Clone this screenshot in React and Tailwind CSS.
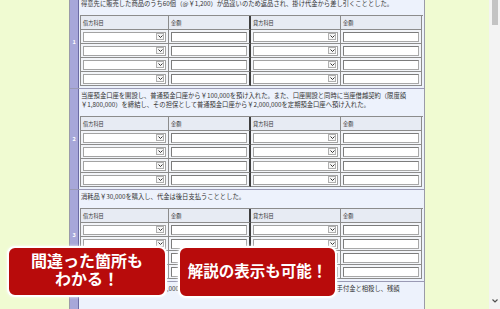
const questions = [
  {
    no: 1,
    lines: ['得意先に販売した商品のうち60個（@￥1,200）が品違いのため返品され、掛け代金から差し引くこととした。'],
  },
  {
    no: 2,
    lines: [
      '当座預金口座を開設し、普通預金口座から￥100,000を預け入れた。また、口座開設と同時に当座借越契約（限度額',
      '￥1,800,000）を締結し、その担保として普通預金口座から￥2,000,000を定期預金口座へ預け入れた。',
    ],
  },
  {
    no: 3,
    lines: ['消耗品￥30,000を購入し、代金は後日支払うこととした。'],
  },
  {
    no: 4,
    lines: ['かねて注文していた商品￥300,000を仕入れ、代金のうち￥60,000は注文時に支払っていた手付金と相殺し、残額'],
    cut: true,
  },
]

function SelectBox() {
  return (
    <div className="flex h-[10px] w-full items-center justify-end border border-[#a3a3a3] bg-white pr-[1px]">
      <div className="flex h-[7px] w-[8px] items-center justify-center border border-[#b0b0b0] bg-[#f6f6f6]">
        <svg width="5" height="3" viewBox="0 0 5 3">
          <path d="M0.5 0.5 L2.5 2.5 L4.5 0.5" stroke="#333" strokeWidth="1" fill="none" />
        </svg>
      </div>
    </div>
  )
}

function InputBox() {
  return <div className="h-[10px] w-full border border-[#a8a8a8] border-l-[#7c7c7c] border-t-[#7c7c7c] bg-white" />
}

function EntryTable() {
  const cell = 'flex h-[14px] items-center border-b border-r border-[#8c8c8c] px-[2px]'
  return (
    <div className="grid w-[343px] grid-cols-[88px_82px_90px_81px] border-l border-t border-[#8c8c8c] text-[5.2px] text-[#333]">
      <div className={`${cell} bg-[#e7ebf3]`}>借方科目</div>
      <div className={`${cell} border-r-2 border-r-[#3e3e3e] bg-[#e7ebf3]`}>金額</div>
      <div className={`${cell} bg-[#e7ebf3]`}>貸方科目</div>
      <div className={`${cell} bg-[#e7ebf3]`}>金額</div>
      {[0, 1, 2, 3].map((r) => (
        <div key={r} className="contents">
          <div className={`${cell} bg-[#f3f5f9]`}><SelectBox /></div>
          <div className={`${cell} border-r-2 border-r-[#3e3e3e] bg-[#f3f5f9]`}><InputBox /></div>
          <div className={`${cell} bg-[#f3f5f9]`}><SelectBox /></div>
          <div className={`${cell} bg-[#f3f5f9]`}><InputBox /></div>
        </div>
      ))}
    </div>
  )
}

function Question({ q }) {
  return (
    <div className="flex border-b border-[#9a9ab4]">
      <div className="flex w-[9px] shrink-0 items-center justify-center border-r border-[#6c6ca4] bg-[#a7a7d9] text-[5.5px] font-bold text-white">
        {q.cut ? '' : q.no}
      </div>
      <div className="pl-[1px] pr-[1px] pb-[2px] pt-[2px]">
        <div className="pl-[1px] text-[6.3px] leading-[9px] text-[#333]">
          {q.lines.map((l, i) => (
            <div key={i} className="whitespace-nowrap">{l}</div>
          ))}
        </div>
        {q.cut ? (
          <div className="h-[40px]" />
        ) : (
          <div className="mt-[7px]">
            <EntryTable />
          </div>
        )}
      </div>
    </div>
  )
}

export default function App() {
  return (
    <div className="relative flex h-[309px] w-[500px] overflow-hidden bg-[#f0fbd2] font-['Noto_Sans_CJK_JP',sans-serif]">
      <div className="w-[69px] shrink-0" />

      <div className="w-[356px] shrink-0 border-x border-[#9a9aa8] bg-[#edf2fc]">
        <div className="-mt-[3px]">
          {questions.map((q) => (
            <Question key={q.no} q={q} />
          ))}
        </div>
      </div>

      <div className="flex-1" />

      {/* scrollbar */}
      <div className="flex w-[11px] shrink-0 flex-col items-center bg-[#f3f3f3]">
        <div className="h-[25px] w-[6px] bg-[#c3c3c3]" />
        <div className="mt-auto mb-[6px]">
          <svg width="6" height="4" viewBox="0 0 6 4">
            <path d="M0.5 0.5 L3 3 L5.5 0.5" stroke="#505050" strokeWidth="1.2" fill="none" />
          </svg>
        </div>
      </div>

      {/* callouts */}
      <div className="absolute left-[7px] top-[246px] flex h-[51px] w-[160px] flex-col items-center justify-center rounded-[8px] border-[2px] border-white bg-[#b80b0b] pb-[5px] text-[16px] font-bold leading-[18px] text-white shadow-[0_0_3px_rgba(255,255,255,0.9)]">
        <span>間違った箇所も</span>
        <span>わかる！</span>
      </div>
      <div className="absolute left-[178px] top-[246px] flex h-[52px] w-[159px] items-center justify-center rounded-[8px] border-[2px] border-white bg-[#b80b0b] pb-[2px] text-[15.5px] font-bold text-white shadow-[0_0_3px_rgba(255,255,255,0.9)]">
        解説の表示も可能！
      </div>
    </div>
  )
}
